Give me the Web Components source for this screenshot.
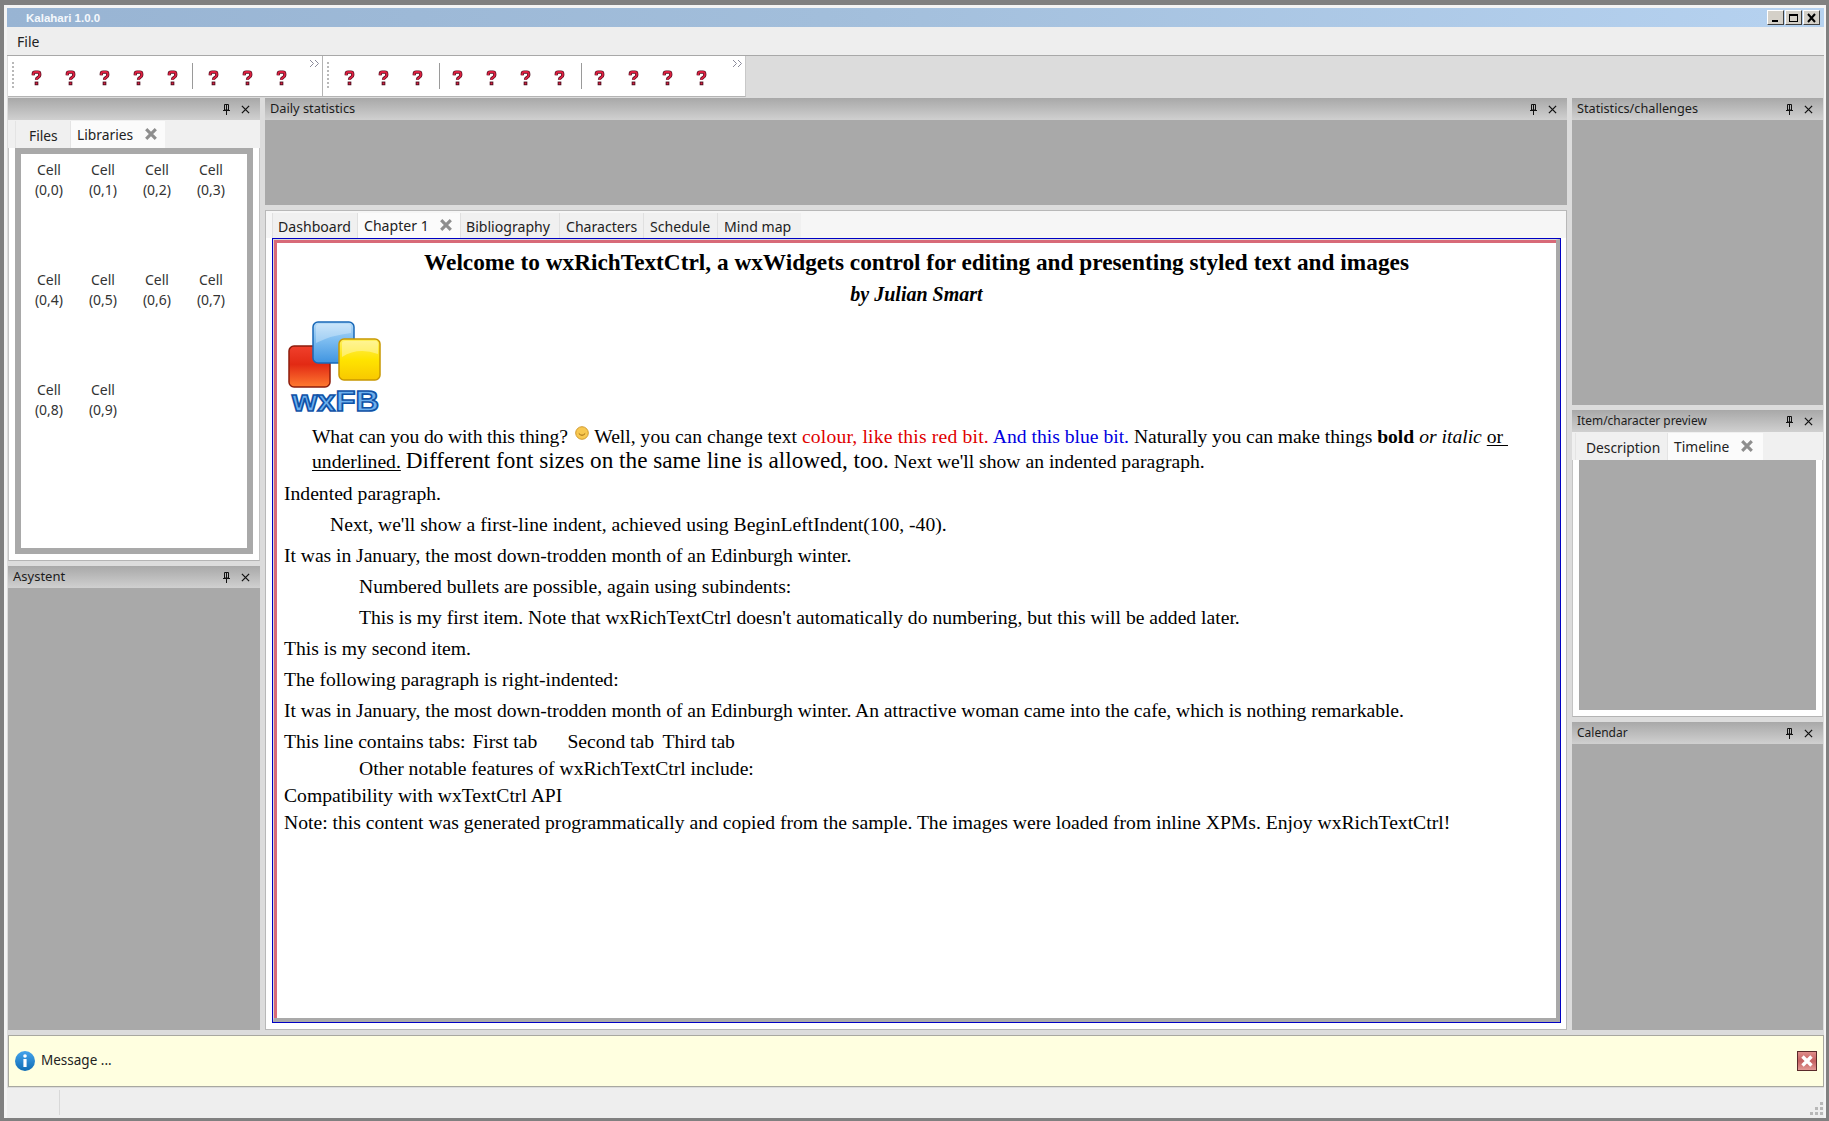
<!DOCTYPE html>
<html>
<head>
<meta charset="utf-8">
<title>Kalahari</title>
<style>
    html, body { margin: 0; height: 100%; }
    body {
        width: 1829px;
        height: 1121px;
        box-sizing: border-box;
        background: #808080;
        padding: 5px 3px 3px 4px;
        overflow: hidden;
        font-family: "Noto Sans", sans-serif;
    }
</style>
</head>
<body>
<app-window>
    <title-bar caption="Kalahari 1.0.0"></title-bar>
    <menu-bar><span>File</span></menu-bar>
    <tool-strip>
        <tool-bar count="5,3" first></tool-bar>
        <tool-bar count="3,4,4"></tool-bar>
    </tool-strip>
    <dock-area>
        <dock-column style="width:252px">
            <dock-pane caption="" style="height:463px">
                <tab-book tabs="Files,Libraries" active="1" left="7" widths="55,95" pad="13">
                    <cell-grid></cell-grid>
                </tab-book>
            </dock-pane>
            <dock-pane caption="Asystent" style="flex:1;--cap:13px" empty></dock-pane>
        </dock-column>
        <dock-column style="width:1302px">
            <dock-pane caption="Daily statistics" style="height:107px;--cap:12.8px" empty></dock-pane>
            <note-book style="flex:1">
                <rich-doc></rich-doc>
            </note-book>
        </dock-column>
        <dock-column style="width:251px">
            <dock-pane caption="Statistics/challenges" style="height:307px;--cap:12.7px" empty></dock-pane>
            <dock-pane caption="Item/character preview" style="height:307px;--cap:11.9px">
                <tab-book tabs="Description,Timeline" active="1" left="3" widths="92,96" pad="10" gray></tab-book>
            </dock-pane>
            <dock-pane caption="Calendar" style="flex:1" empty></dock-pane>
        </dock-column>
    </dock-area>
    <info-bar>Message ...</info-bar>
    <status-bar></status-bar>
</app-window>

<script>
const closeX = (color, size, w) => `<svg width="${size}" height="${size}" viewBox="0 0 10 10"><path d="M1 1L9 9M9 1L1 9" stroke="${color}" stroke-width="${w}" fill="none"/></svg>`;

class AppWindow extends HTMLElement {
    constructor () {
        super();
        this.attachShadow({ mode: 'open' });
        this.shadowRoot.innerHTML = `
            <style>
                :host {
                    display: flex;
                    flex-direction: column;
                    box-sizing: border-box;
                    height: 1113px;
                    background: #dcdcdc;
                    border-top: 3px solid #f4f4f4;
                    border-left: 3px solid #f4f4f4;
                    border-right: 2px solid #f4f4f4;
                }
            </style>
            <slot></slot>
        `;
    }
}

class TitleBar extends HTMLElement {
    constructor () {
        super();
        this.attachShadow({ mode: 'open' });
        this.shadowRoot.innerHTML = `
            <style>
                :host {
                    display: flex;
                    align-items: center;
                    height: 19px;
                    padding: 0 4px 0 19px;
                    background: linear-gradient(90deg, #98b4d3, #a2bedb 45%, #b6d2f0);
                    color: #f4f8fc;
                    font: bold 11.5px "Liberation Sans", sans-serif;
                }
                .name { flex: 1; }
                .btn {
                    box-sizing: border-box;
                    width: 17px;
                    height: 15px;
                    margin-left: 1px;
                    background: #d4d0c8;
                    border: 1px solid;
                    border-color: #fff #404040 #404040 #fff;
                    display: flex;
                    align-items: center;
                    justify-content: center;
                }
            </style>
            <span class="name"></span>
            <div class="btn"><svg width="11" height="10"><rect x="2" y="7" width="6" height="2"/></svg></div>
            <div class="btn"><svg width="11" height="10"><rect x="1.5" y="1.5" width="8" height="7" fill="none" stroke="#000"/><rect x="1" y="1" width="9" height="2"/></svg></div>
            <div class="btn"><svg width="11" height="10"><path d="M2 1L9 9M9 1L2 9" stroke="#000" stroke-width="2"/></svg></div>
        `;
    }
    connectedCallback() {
        this.shadowRoot.querySelector('.name').textContent = this.getAttribute('caption');
    }
}

class MenuBar extends HTMLElement {
    constructor () {
        super();
        this.attachShadow({ mode: 'open' });
        this.shadowRoot.innerHTML = `
            <style>
                :host {
                    display: flex;
                    align-items: center;
                    height: 28px;
                    padding-left: 10px;
                    background: #eeeeee;
                    border-bottom: 1px solid #a8a8a8;
                    color: #222;
                    font-size: 14px;
                }
            </style>
            <slot></slot>
        `;
    }
}

class ToolStrip extends HTMLElement {
    constructor () {
        super();
        this.attachShadow({ mode: 'open' });
        this.shadowRoot.innerHTML = `
            <style>
                :host {
                    display: flex;
                    height: 42px;
                    padding-left: 1px;
                    background: #dcdcdc;
                }
            </style>
            <slot></slot>
        `;
    }
}

class ToolBar extends HTMLElement {
    constructor () {
        super();
        this.attachShadow({ mode: 'open' });
    }
    connectedCallback() {
        //how many buttons go in each group, comma separated
        const groups = this.getAttribute('count').split(',').map(Number);
        const first = this.hasAttribute('first');
        const icon = `<svg class="q" width="11" height="16" viewBox="0 0 12 17">
                <path d="M2.5 5.5V4Q2.5 2 4.5 2H7.5Q9.5 2 9.5 4V5.5Q9.5 7 7.5 8Q6 8.6 6 10.5" fill="none" stroke="#4a1020" stroke-width="3.6"/>
                <rect x="4" y="12.4" width="4" height="4" fill="#4a1020"/>
                <path d="M2.5 5.5V4Q2.5 2 4.5 2H7.5Q9.5 2 9.5 4V5.5Q9.5 7 7.5 8Q6 8.6 6 10.5" fill="none" stroke="#dc2040" stroke-width="2.1"/>
                <rect x="5" y="13.4" width="2" height="2" fill="#dc2040"/>
            </svg>`;
        const html = groups.map(n => `<div class="tool">${icon}</div>`.repeat(n)).join('<i class="sep"></i>');
        this.shadowRoot.innerHTML = `
            <style>
                :host {
                    display: flex;
                    align-items: stretch;
                    box-sizing: border-box;
                    width: ${first ? 314 : 424}px;
                    height: 41px;
                    background: #fff;
                    border-bottom: 1px solid #b4b4b4;
                    ${first ? '' : 'border-left: 1px solid #b4b4b4; border-right: 1px solid #c8c8c8;'}
                    position: relative;
                }
                .grip {
                    width: 2px;
                    margin: 6px ${first ? 5 : 3}px 6px 4px;
                    background: repeating-linear-gradient(#b8b8b8 0 2px, transparent 2px 4px);
                }
                .tool {
                    width: 34px;
                    display: flex;
                    align-items: center;
                    justify-content: center;
                }
                .q { margin-top: 3px; }
                .sep {
                    width: 1px;
                    background: #9a9a9a;
                    margin: 7px ${first ? 3 : 0}px 7px ${first ? 3 : 5}px;
                }
                .more {
                    position: absolute;
                    top: 3px;
                    right: ${first ? 2 : 2}px;
                    width: 11px;
                    height: 9px;
                }
            </style>
            <div class="grip"></div>
            ${html}
            <svg class="more" viewBox="0 0 11 9"><path d="M1 1L4.5 4.5L1 8M6 1L9.5 4.5L6 8" fill="none" stroke="#8a8a9a"/></svg>
        `;
    }
}

class DockArea extends HTMLElement {
    constructor () {
        super();
        this.attachShadow({ mode: 'open' });
        this.shadowRoot.innerHTML = `
            <style>
                :host {
                    display: flex;
                    gap: 5px;
                    height: 932px;
                    padding-left: 1px;
                    background: #dcdcdc;
                }
            </style>
            <slot></slot>
        `;
    }
}

class DockColumn extends HTMLElement {
    constructor () {
        super();
        this.attachShadow({ mode: 'open' });
        this.shadowRoot.innerHTML = `
            <style>
                :host {
                    display: flex;
                    flex-direction: column;
                    gap: 5px;
                }
            </style>
            <slot></slot>
        `;
    }
}

class DockPane extends HTMLElement {
    constructor () {
        super();
        this.attachShadow({ mode: 'open' });
        this.shadowRoot.innerHTML = `
            <style>
                :host {
                    display: flex;
                    flex-direction: column;
                    min-height: 0;
                }
                .cap {
                    flex: none;
                    display: flex;
                    align-items: center;
                    height: 22px;
                    padding: 0 10px 0 5px;
                    background: linear-gradient(#a8a8a8, #d0d0d0);
                    color: #1c1c1c;
                    font: var(--cap, 12px) "Noto Sans", sans-serif;
                }
                .label { flex: 1; padding-bottom: 2px; }
                .pin { margin-right: 11px; }
                .body {
                    flex: 1;
                    display: flex;
                    flex-direction: column;
                    min-height: 0;
                    background: #f0f0f0;
                }
                :host([empty]) .body { background: #a9a9a9; }
            </style>
            <div class="cap">
                <span class="label"></span>
                <svg class="pin" width="7" height="11" viewBox="0 0 7 11"><path d="M1.5 .5H5.5V6H1.5ZM3.5 1V6" fill="none" stroke="#111"/><path d="M0 6.5H7M3.5 7V11" stroke="#111"/></svg>
                ${closeX('#111', 9, 1.4)}
            </div>
            <div class="body"><slot></slot></div>
        `;
    }
    connectedCallback() {
        this.shadowRoot.querySelector('.label').innerHTML = this.getAttribute('caption') || '&nbsp;';
    }
}

class TabBook extends HTMLElement {
    constructor () {
        super();
        this.attachShadow({ mode: 'open' });
    }
    connectedCallback() {
        const tabs = this.getAttribute('tabs').split(',');
        const widths = this.getAttribute('widths').split(',');
        const active = Number(this.getAttribute('active'));
        const heads = tabs.map((t, i) => `
            <div class="tab ${i === active ? 'on' : ''}" style="width:${widths[i]}px">
                <span>${t}</span>${i === active ? `<b>${closeX('#8e8e8e', 12, 2.6)}</b>` : ''}
            </div>`).join('');
        this.shadowRoot.innerHTML = `
            <style>
                :host {
                    flex: 1;
                    display: flex;
                    flex-direction: column;
                    min-height: 0;
                    font-size: 13.8px;
                    color: #222;
                }
                .row {
                    flex: none;
                    display: flex;
                    height: 27px;
                    padding: 1px 0 0 ${this.getAttribute('left')}px;
                }
                .tab {
                    box-sizing: border-box;
                    display: flex;
                    align-items: center;
                    padding: 2px 0 0 ${this.getAttribute('pad')}px;
                    background: #f0f0f0;
                    border-left: 1px solid #e4e4e4;
                }
                .tab.on {
                    background: #fbfbfb;
                    padding: 0 0 1px 6px;
                }
                b { margin-left: 12px; display: flex; }
                .panel {
                    flex: 1;
                    display: flex;
                    min-height: 0;
                    padding: 0 6px 6px 6px;
                    background: #fff;
                    border-bottom: 1px solid #b4b4b4;
                    border-left: 1px solid #c4c4c4;
                    border-right: 1px solid #c4c4c4;
                }
                .frame {
                    flex: 1;
                    min-width: 0;
                    background: #a9a9a9;
                    padding: 6px;
                    display: flex;
                }
                :host([gray]) .frame { padding: 0; }
                .inner { flex: 1; background: #fff; }
                :host([gray]) .inner { background: #a9a9a9; }
            </style>
            <div class="row">${heads}</div>
            <div class="panel"><div class="frame"><div class="inner"><slot></slot></div></div></div>
        `;
    }
}

class CellGrid extends HTMLElement {
    constructor () {
        super();
        this.attachShadow({ mode: 'open' });
        let cells = '';
        for (let i = 0; i < 10; i++) {
            cells += `<div>Cell<br>(0,${i})</div>`;
        }
        this.shadowRoot.innerHTML = `
            <style>
                :host {
                    display: grid;
                    grid-template-columns: repeat(4, 54px);
                    grid-auto-rows: 110px;
                    padding: 6px 0 0 1px;
                    color: #333;
                    font-size: 14px;
                    line-height: 20px;
                    text-align: center;
                }
            </style>
            ${cells}
        `;
    }
}

class NoteBook extends HTMLElement {
    constructor () {
        super();
        this.attachShadow({ mode: 'open' });
        const tabs = [['Dashboard', 85, 5], ['Chapter 1', 103, 6], ['Bibliography', 99, 5], ['Characters', 84, 6], ['Schedule', 74, 6], ['Mind map', 84, 6]];
        const heads = tabs.map(([t, w, p], i) => `
            <div class="tab ${i === 1 ? 'on' : ''}" style="width:${w}px;padding-left:${p}px"><span>${t}</span>${i === 1 ? `<b>${closeX('#8e8e8e', 12, 2.6)}</b>` : ''}</div>`).join('');
        this.shadowRoot.innerHTML = `
            <style>
                :host {
                    display: flex;
                    flex-direction: column;
                    min-height: 0;
                    box-sizing: border-box;
                    background: #f6f6f6;
                    border: 1px solid #b8b8b8;
                    font-size: 14.1px;
                    color: #222;
                }
                .row {
                    flex: none;
                    display: flex;
                    height: 27px;
                    padding: 0 0 0 6px;
                }
                .tab {
                    box-sizing: border-box;
                    display: flex;
                    align-items: center;
                    margin-top: 2px;
                    padding-top: 2px;
                    background: #f0f0f0;
                    border-left: 1px solid #e0e0e0;
                }
                .tab.on {
                    background: #fbfbfb;
                    padding-top: 0;
                    padding-bottom: 1px;
                }
                b { margin-left: 11px; display: flex; }
                .page {
                    flex: 1;
                    display: flex;
                    min-height: 0;
                    padding: 0 5px 6px 6px;
                    background: #fff;
                }
            </style>
            <div class="row">${heads}</div>
            <div class="page"><slot></slot></div>
        `;
    }
}

class WxLogo extends HTMLElement {
    constructor () {
        super();
        this.attachShadow({ mode: 'open' });
        this.shadowRoot.innerHTML = `
            <style>
                :host { display: block; width: 94px; height: 98px; }
                text { font: 900 30px "Liberation Sans", sans-serif; }
            </style>
            <svg width="94" height="98" viewBox="0 0 94 98">
                <defs>
                    <linearGradient id="r" x1="0" y1="0" x2="0" y2="1"><stop offset="0" stop-color="#f0402c"/><stop offset=".45" stop-color="#e22a14"/><stop offset="1" stop-color="#ff7a30"/></linearGradient>
                    <linearGradient id="b" x1="0" y1="0" x2="0" y2="1"><stop offset="0" stop-color="#b8dcf8"/><stop offset=".45" stop-color="#7cbcf0"/><stop offset="1" stop-color="#3f94e0"/></linearGradient>
                    <linearGradient id="y" x1="0" y1="0" x2="0" y2="1"><stop offset="0" stop-color="#fff060"/><stop offset=".5" stop-color="#ffe400"/><stop offset="1" stop-color="#f8c800"/></linearGradient>
                </defs>
                <rect x="1" y="25" width="41" height="41" rx="5" fill="url(#r)" stroke="#8c1c0c" stroke-width="1.5"/>
                <rect x="25" y="1" width="41" height="41" rx="5" fill="url(#b)" stroke="#1868b8" stroke-width="1.5"/>
                <path d="M28 6Q28 3 31 3H60Q63 3 63 6V12Q44 14 28 22Z" fill="#fff" opacity=".3"/>
                <rect x="51" y="18" width="41" height="41" rx="5" fill="url(#y)" stroke="#c89800" stroke-width="1.5"/>
                <path d="M54 22Q54 20 57 20H88Q90 20 90 23V33Q70 26 54 36Z" fill="#fff" opacity=".35"/>
                <text x="4" y="89.5" textLength="87" lengthAdjust="spacingAndGlyphs" fill="#6cb0ee" stroke="#0f52a8" stroke-width="1.6">wxFB</text>
            </svg>
        `;
    }
}

class RichDoc extends HTMLElement {
    constructor () {
        super();
        this.attachShadow({ mode: 'open' });
        this.shadowRoot.innerHTML = `
            <style>
                :host {
                    flex: 1;
                    display: block;
                    min-width: 0;
                    box-sizing: border-box;
                    border: 1px solid #0000c4;
                    font: 19.64px/21px "Liberation Serif", serif;
                    color: #000;
                }
                .mid {
                    box-sizing: border-box;
                    height: 100%;
                    border-style: solid;
                    border-color: #d9d9d9 #a9a9a9 #a9a9a9 #d9d9d9;
                    border-width: 1px 4px 4px 1px;
                }
                .doc {
                    box-sizing: border-box;
                    height: 100%;
                    padding: 7px 0 0 7px;
                    background: #fff;
                    border-style: solid;
                    border-color: #d86a78;
                    border-width: 3px 0 0 3px;
                    white-space: nowrap;
                }
                p { margin: 0 0 10px; }
                h1 { margin: 0 0 10px -7px; font-size: 23.3px; line-height: 24px; text-align: center; }
                .by { font-weight: bold; font-style: italic; text-align: center; font-size: 20px; margin: 0 0 16px -7px; }
                wx-logo { margin: 0 0 5px 4px; }
                .lead { padding-left: 28px; line-height: 24px; margin-bottom: 10px; }
                .lead u { text-underline-offset: 2px; }
                .red { color: #e00000; letter-spacing: .18px; }
                .blue { color: #0000e0; }
                .big { font-size: 23.2px; }
                .smile { display: inline-block; vertical-align: 3px; margin: 0 1px 0 2px; }
                .l1 { padding-left: 46px; }
                .l2 { padding-left: 75px; }
                .t { display: inline-block; }
                .tight { margin-bottom: 6px; }
                .a { letter-spacing: -.15px; }
                .n { letter-spacing: -.09px; }
                .w { letter-spacing: -.04px; }
            </style>
            <div class="mid"><div class="doc">
                <h1>Welcome to wxRichTextCtrl, a wxWidgets control for editing and presenting styled text and images</h1>
                <p class="by">by Julian Smart</p>
                <wx-logo></wx-logo>
                <p class="lead"><span class="a">What can you do with this thing?</span> <svg class="smile" width="14" height="14" viewBox="0 0 14 14"><circle cx="7" cy="7" r="6.3" fill="#f8c850" stroke="#d09a30"/><path d="M3.8 7.5Q7 11 10.2 7.5" fill="none" stroke="#a06a10"/></svg> Well, you can change text <span class="red">colour, like this red bit.</span> <span class="blue">And this blue bit.</span> <span class="n">Naturally you can make things</span> <b>bold</b> <i>or italic</i> <u>or&nbsp;</u><br><u>underlined.</u> <span class="big">Different font sizes on the same line is allowed, too.</span> Next we'll show an indented paragraph.</p>
                <p>Indented paragraph.</p>
                <p class="l1">Next, we'll show a first-line indent, achieved using BeginLeftIndent(100, -40).</p>
                <p class="w">It was in January, the most down-trodden month of an Edinburgh winter.</p>
                <p class="l2">Numbered bullets are possible, again using subindents:</p>
                <p class="l2">This is my first item. Note that wxRichTextCtrl doesn't automatically do numbering, but this will be added later.</p>
                <p>This is my second item.</p>
                <p>The following paragraph is right-indented:</p>
                <p class="w">It was in January, the most down-trodden month of an Edinburgh winter. An attractive woman came into the cafe, which is nothing remarkable.</p>
                <p class="tight">This line contains tabs: <span class="t" style="width:95px;margin-left:2px">First tab</span><span class="t" style="width:95px">Second tab</span><span class="t">Third tab</span></p>
                <p class="l2 tight">Other notable features of wxRichTextCtrl include:</p>
                <p class="tight">Compatibility with wxTextCtrl API</p>
                <p>Note: this content was generated programmatically and copied from the sample. The images were loaded from inline XPMs. Enjoy wxRichTextCtrl!</p>
            </div></div>
        `;
    }
}

class InfoBar extends HTMLElement {
    constructor () {
        super();
        this.attachShadow({ mode: 'open' });
        this.shadowRoot.innerHTML = `
            <style>
                :host {
                    display: flex;
                    align-items: center;
                    box-sizing: border-box;
                    height: 52px;
                    margin: 5px 0 0 1px;
                    padding: 0 6px 0 6px;
                    background: #ffffe0;
                    border: 1px solid #a8a8a0;
                    color: #222;
                    font-size: 13.5px;
                }
                .text { flex: 1; margin-left: 6px; padding-bottom: 2px; }
            </style>
            <svg width="20" height="20" viewBox="0 0 20 20">
                <defs><linearGradient id="g" x1="0" y1="0" x2="0" y2="1"><stop offset="0" stop-color="#45a4ec"/><stop offset="1" stop-color="#0f6cb4"/></linearGradient></defs>
                <circle cx="10" cy="10" r="10" fill="url(#g)"/>
                <circle cx="10" cy="5" r="1.8" fill="#fff"/>
                <rect x="8.4" y="8" width="3.2" height="8" fill="#fff"/>
            </svg>
            <span class="text"><slot></slot></span>
            <svg width="20" height="20" viewBox="0 0 20 20">
                <defs><linearGradient id="x" x1="0" y1="0" x2="0" y2="1"><stop offset="0" stop-color="#e0908c"/><stop offset=".5" stop-color="#c46060"/><stop offset="1" stop-color="#e49c98"/></linearGradient></defs>
                <rect x=".5" y=".5" width="19" height="19" fill="url(#x)" stroke="#5a2a2a"/>
                <path d="M5.5 5.5L14.5 14.5M14.5 5.5L5.5 14.5" stroke="#fff" stroke-width="3.4"/>
            </svg>
        `;
    }
}

class StatusBar extends HTMLElement {
    constructor () {
        super();
        this.attachShadow({ mode: 'open' });
        let dots = '';
        for (const [x, y] of [[10, 0], [5, 5], [10, 5], [0, 10], [5, 10], [10, 10]]) {
            dots += `<rect x="${x}" y="${y}" width="3" height="3" fill="#b8b8b8"/>`;
        }
        this.shadowRoot.innerHTML = `
            <style>
                :host {
                    flex: 1;
                    display: flex;
                    justify-content: flex-end;
                    align-items: flex-end;
                    margin-top: 1px;
                    padding: 0 1px 3px 0;
                    background: #eeeeee;
                    position: relative;
                }
                .cell {
                    position: absolute;
                    left: 52px;
                    top: 2px;
                    bottom: 3px;
                    width: 1px;
                    background: #d8d8d8;
                }
            </style>
            <div class="cell"></div>
            <svg width="13" height="13">${dots}</svg>
        `;
    }
}

customElements.define('app-window', AppWindow);
customElements.define('title-bar', TitleBar);
customElements.define('menu-bar', MenuBar);
customElements.define('tool-strip', ToolStrip);
customElements.define('tool-bar', ToolBar);
customElements.define('dock-area', DockArea);
customElements.define('dock-column', DockColumn);
customElements.define('dock-pane', DockPane);
customElements.define('tab-book', TabBook);
customElements.define('cell-grid', CellGrid);
customElements.define('note-book', NoteBook);
customElements.define('wx-logo', WxLogo);
customElements.define('rich-doc', RichDoc);
customElements.define('info-bar', InfoBar);
customElements.define('status-bar', StatusBar);
</script>
</body>
</html>
